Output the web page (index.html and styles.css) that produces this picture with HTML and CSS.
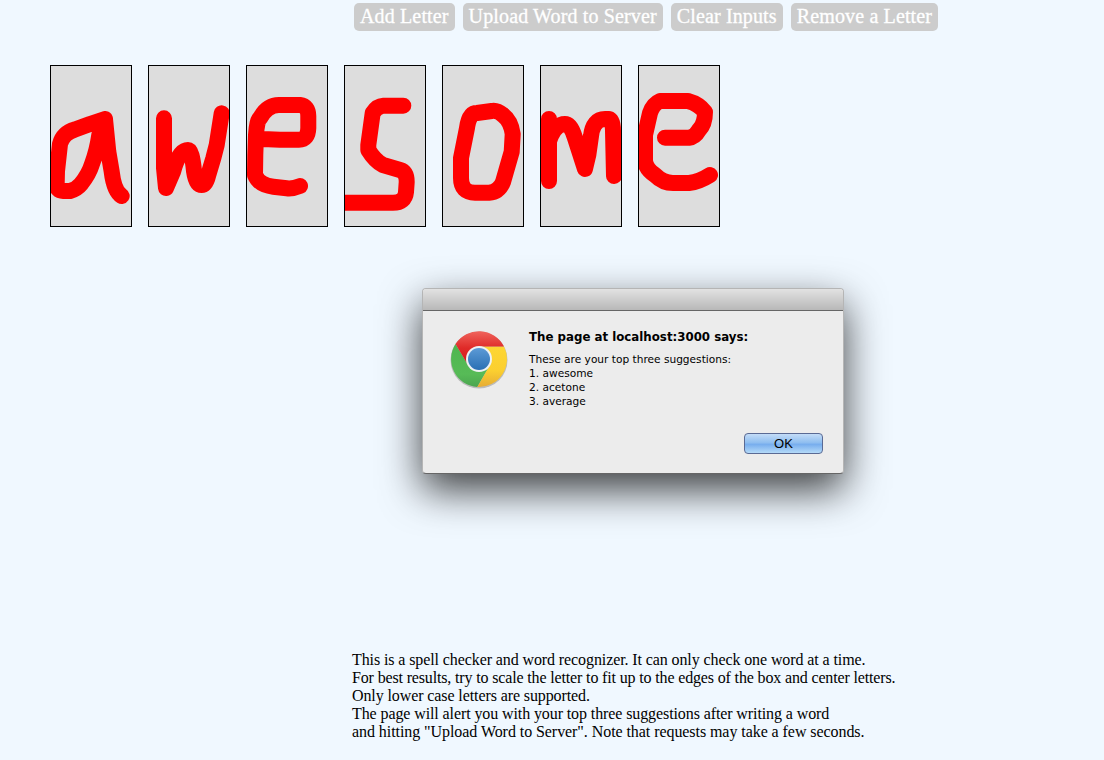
FILE: index.html
```html
<!DOCTYPE html>
<html lang="en">
<head>
    <meta charset="UTF-8">
    <title>Word Recognizer</title>
    <link rel="stylesheet" href="styles.css">
</head>
<body>
    <div class="buttons">
        <button>Add Letter</button>
        <button>Upload Word to Server</button>
        <button>Clear Inputs</button>
        <button>Remove a Letter</button>
    </div>

    <div class="letters">
        <svg class="letter" viewBox="0 0 80 160"><path d="M54,53 L39,58 L24,63.5 Q12,67 9,78 L6,105 L5.7,118 Q5.7,125 12,125 L19,125 Q26,123 30,118 Q38,108 41,98 Q46,85 48.3,69 L54,53 L57.3,85.7 L60.7,105.7 Q63,125 70.7,130"/></svg>
        <svg class="letter" viewBox="0 0 80 160"><path d="M15,52.3 L15,102 L17,122 L24.3,105 Q30,84 39,84 Q43,84 45,105 Q47,119 52.7,119 Q57,119 59.3,109 L64.3,92.3 L67.7,79 L72.7,47.3"/></svg>
        <svg class="letter" viewBox="0 0 80 160"><path d="M53,120 Q46,123 39.7,122.3 L26.3,120.7 Q12,119 8,109 L8.3,89 L9,69 Q10,54 13,52.3 Q20,39 32,39 L53,39 Q61.3,40 61.3,50 L61.3,62 Q61,73.7 52,73.7 L33,73.7 L9.7,72.7"/></svg>
        <svg class="letter" viewBox="0 0 80 160"><path d="M58.3,39.7 L38.3,39.7 Q32,40 27.7,47 L23.3,79 L23.3,84 Q30,95 38,99 L55,104 Q61.7,106 61.7,116 L61,126 Q60,136.7 48,136.7 L-8,136.7"/></svg>
        <svg class="letter" viewBox="0 0 80 160"><path d="M48.7,45 L34,47 Q26,47 24,62 L18,92 L18,112 Q18,126.7 32,126.7 L46,126.7 Q56,126 60,116 L68.7,85.7 L69.7,68 Q68,55 60,49 Q54,44 48.7,45"/></svg>
        <svg class="letter" viewBox="0 0 80 160"><path d="M8,53 L8,115 M8,75 Q14,58 24,58 Q30,58 34,72 L44,103 L47.3,89 L50,70 Q52,53 64,53 L68,53 Q72,54 72,65 L73,110"/></svg>
        <svg class="letter" viewBox="0 0 80 160"><path d="M26,71.7 L50,71.7 Q56,71 60,64 Q66,58 66,46 Q60,38 49,35 Q40,35 21,35 Q14,38 11,47 L6,69 L6,95 Q7,103 16,109 Q24,117 34,117 L50,117 Q60,116 71,109"/></svg>
    </div>

    <div class="info">
        This is a spell checker and word recognizer. It can only check one word at a time.<br>
        <span class="tight">For best results, try to scale the letter to fit up to the edges of the box and center letters.</span><br>
        Only lower case letters are supported.<br>
        The page will alert you with your top three suggestions after writing a word<br>
        <span class="loose">and hitting "Upload Word to Server". Note that requests may take a few seconds.</span>
    </div>

    <!-- alert box over the page -->
    <div class="alert">
        <div class="alert-title"></div>
        <div class="alert-body">
            <svg class="chrome" viewBox="-29 -29 58 60">
                <defs>
                    <linearGradient id="red" x1="0" y1="0" x2="0" y2="1">
                        <stop offset="0" stop-color="#f0645c"/>
                        <stop offset="0.5" stop-color="#df2a28"/>
                        <stop offset="1" stop-color="#d9171b"/>
                    </linearGradient>
                    <linearGradient id="yellow" x1="0" y1="0" x2="0" y2="1">
                        <stop offset="0" stop-color="#fdd633"/>
                        <stop offset="0.6" stop-color="#fbcf30"/>
                        <stop offset="1" stop-color="#e6ac35"/>
                    </linearGradient>
                    <linearGradient id="green" x1="0" y1="0" x2="0" y2="1">
                        <stop offset="0" stop-color="#4fb64f"/>
                        <stop offset="0.7" stop-color="#57bb57"/>
                        <stop offset="1" stop-color="#4ba550"/>
                    </linearGradient>
                    <linearGradient id="blue" x1="0" y1="0" x2="0" y2="1">
                        <stop offset="0" stop-color="#5c9ad6"/>
                        <stop offset="1" stop-color="#2a70b4"/>
                    </linearGradient>
                </defs>
                <circle cx="0" cy="1" r="28.5" fill="#bbb"/>
                <path fill="url(#green)" d="M-1.7,28 A28,28 0 0 1 -23.5,-15 L-11,6 L11,6 Z"/>
                <path fill="url(#yellow)" d="M25,-12.5 A28,28 0 0 1 -1.7,28 L11,6 L0,-12.5 Z"/>
                <path fill="url(#red)" d="M-23.5,-15 A28,28 0 0 1 25,-12.5 L0,-12.5 L-11,6 Z"/>
                <circle r="13" fill="#eef1f4"/>
                <circle r="11" fill="url(#blue)"/>
            </svg>
            <div class="alert-text">
                <div class="alert-heading">The page at localhost:3000 says:</div>
                <div class="alert-msg">
                    These are your top three suggestions:<br>
                    1. awesome<br>
                    2. acetone<br>
                    3. average
                </div>
            </div>
        </div>
        <div class="alert-footer">
            <button class="ok">OK</button>
        </div>
    </div>
</body>
</html>
```

FILE: styles.css
```css
body {
    font-family: "Liberation Serif", serif;
    background-color: #f0f8ff;
    margin: 0;
    padding: 0;
    color: #000;
}

.buttons {
    display: flex;
    gap: 8px;
    margin-left: 354px;
    padding-top: 3px;
}

.buttons button {
    font-family: "Liberation Serif", serif;
    font-size: 20px;
    letter-spacing: 0.14px;
    line-height: 26px;
    height: 28px;
    padding: 0 6px 2px;
    color: #fff;
    -webkit-text-stroke: 0.3px #fff;
    background-color: #ccc;
    border: none;
    border-radius: 5px;
}

.letters {
    display: flex;
    gap: 16px;
    margin-top: 34px;
    margin-left: 50px;
}

.letter {
    width: 80px;
    height: 160px;
    border: 1px solid #000;
    background-color: #ddd;
}

.letter path {
    fill: none;
    stroke: #f00;
    stroke-width: 16;
    stroke-linecap: round;
    stroke-linejoin: round;
}

.info {
    margin-top: 424px;
    margin-left: 352px;
    font-size: 16px;
    letter-spacing: -0.1px;
    line-height: 18px;
}

.tight {
    letter-spacing: -0.15px;
}

.loose {
    letter-spacing: -0.065px;
}

.alert {
    position: absolute;
    left: 422px;
    top: 288px;
    width: 422px;
    height: 186px;
    box-sizing: border-box;
    background-color: #ececec;
    border: 1px solid #b5b5b5;
    border-bottom-color: #666;
    border-radius: 4px;
    box-shadow: 0 16px 40px rgba(0, 0, 0, 0.75);
    font-family: "DejaVu Sans", sans-serif;
}

.alert-title {
    height: 21px;
    background: linear-gradient(to bottom, #e2e2e2, #b8b8b8);
    border-bottom: 1px solid #666;
    border-radius: 3px 3px 0 0;
}

.alert-body {
    display: flex;
    padding: 19px 0 0 27px;
}

.chrome {
    width: 58px;
    height: 60px;
    flex: none;
}

.alert-text {
    margin-left: 21px;
}

.alert-heading {
    font-size: 11.8px;
    font-weight: bold;
    line-height: 14px;
}

.alert-msg {
    font-size: 10.6px;
    line-height: 14px;
    margin-top: 8px;
}

.alert-footer {
    display: flex;
    justify-content: flex-end;
    padding: 0 20px;
    margin-top: 25px;
}

.ok {
    width: 79px;
    height: 21px;
    padding: 0;
    font-family: "Liberation Sans", sans-serif;
    font-size: 13px;
    color: #000;
    border: 1px solid #5a6a94;
    border-radius: 4px;
    background: linear-gradient(to bottom, #c4dcf7 0%, #8fbef0 45%, #78aeee 55%, #b4daf8 100%);
}
```
